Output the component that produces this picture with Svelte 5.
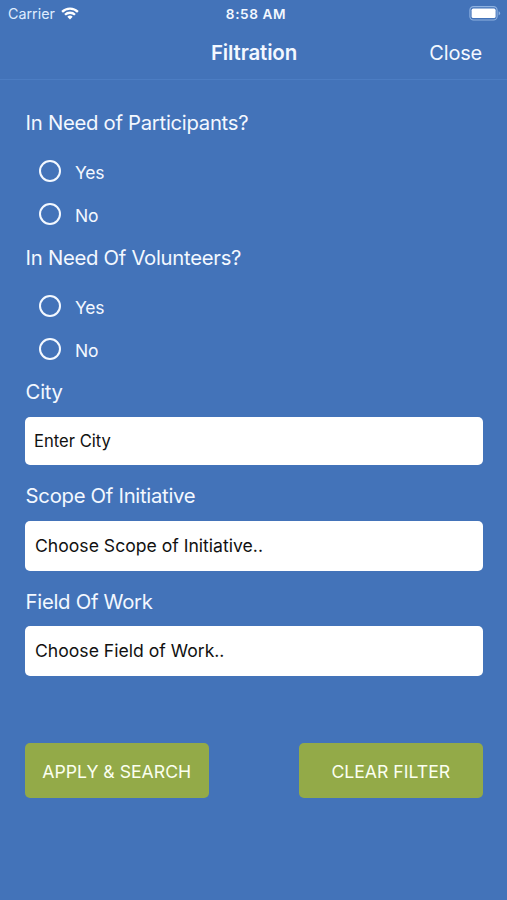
<script>
  const questions = ['In Need of Participants?', 'In Need Of Volunteers?'];
</script>

<div class="screen">
  <div class="status">
    <div class="carrier">
      <span>Carrier</span>
      <svg width="18" height="13" viewBox="0 0 18 13" fill="none" stroke="#fff" stroke-width="2.3">
        <path d="M1.1 4.9a11.2 11.2 0 0 1 15.8 0" />
        <path d="M4 7.8a7.1 7.1 0 0 1 10 0" />
        <path d="M9 12.5 6.3 9.8a3.8 3.8 0 0 1 5.4 0z" fill="#fff" stroke="none" />
      </svg>
    </div>
    <span class="time">8:58 AM</span>
    <svg class="battery" width="32" height="15" viewBox="0 0 32 15">
      <rect x="0.9" y="0.6" width="27.2" height="13.4" rx="3.6" fill="none" stroke="#8fb2e0" stroke-width="1.1" />
      <rect x="2.6" y="2.6" width="24" height="9.4" rx="1.6" fill="#fff" />
      <path d="M29.6 5.2q1.5.6 1.5 2.1t-1.5 2.1z" fill="#8fb2e0" />
    </svg>
  </div>

  <header>
    <h1>Filtration</h1>
    <button class="close">Close</button>
  </header>

  <main>
    {#each questions as question}
      <section>
        <h2>{question}</h2>
        <div class="options">
          {#each ['Yes', 'No'] as option}
            <div class="option"><span class="radio"></span><span class="word">{option}</span></div>
          {/each}
        </div>
      </section>
    {/each}

    <h2 class="town">City</h2>
    <div class="field city"><span>Enter City</span></div>
    <h2 class="scope">Scope Of Initiative</h2>
    <div class="field select"><span>Choose Scope of Initiative..</span></div>
    <h2 class="work">Field Of Work</h2>
    <div class="field select"><span>Choose Field of Work..</span></div>

    <div class="actions">
      <button class="apply">APPLY &amp; SEARCH</button>
      <button class="clear">CLEAR FILTER</button>
    </div>
  </main>
</div>

<style>
  :global(body) { background: #4373b9; }
  .screen {
    width: 507px;
    height: 900px;
    box-sizing: border-box;
    overflow: hidden;
    background: #4373b9;
    color: #f3f8ff;
    font-family: Inter, "Liberation Sans", sans-serif;
    white-space: nowrap;
  }
  .status {
    height: 27px;
    display: grid;
    grid-template-columns: 1fr auto 1fr;
    align-items: center;
    padding: 0 6px 0 8px;
    font-size: 14.3px;
  }
  .carrier { display: flex; align-items: center; gap: 6px; color: #dfecff; }
  .carrier svg { margin: -1px 0 0 0.5px; }
  .time { font-weight: 600; font-size: 13.6px; letter-spacing: 0.6px; margin-left: 3px; }
  .battery { justify-self: end; }
  header {
    height: 53px;
    display: grid;
    grid-template-columns: 1fr auto 1fr;
    align-items: center;
    padding: 0 25px;
    border-bottom: 1px solid #4c7dc3;
    box-sizing: border-box;
  }
  h1 { grid-column: 2; margin: -2px 0 0 1px; font-size: 20.5px; font-weight: 600; letter-spacing: -0.15px; }
  button { border: 0; margin: 0; padding: 0; background: none; color: inherit; font: inherit; }
  .close { justify-self: end; font-size: 20px; letter-spacing: -0.2px; }
  main { padding: 28px 24.5px 0 25px; }
  h2 {
    margin: 0;
    height: 30px;
    line-height: 30px;
    padding-left: 0.6px;
    font-size: 20.3px;
    font-weight: 400;
    letter-spacing: -0.28px;
  }
  section { height: 135px; }
  .options { padding: 12px 0 0 14px; }
  .option { display: flex; align-items: center; gap: 14px; height: 43px; }
  .radio { width: 22px; height: 22px; box-sizing: border-box; border: 2.4px solid #f3f8ff; border-radius: 50%; margin-top: -1px; }
  .word { font-size: 17.5px; margin-top: 2px; letter-spacing: -0.2px; }
  .field {
    background: #fff;
    color: #111;
    border-radius: 5px;
    display: flex;
    align-items: center;
    box-sizing: border-box;
  }
  .town { margin: -1px 0 10px; }
  .city { height: 48px; padding: 0 0 1px 9px; font-size: 16.6px; }
  .select { height: 50px; padding: 0 0 1px 10px; font-size: 17.6px; }
  .scope { margin: 16px 0 10px; }
  .work { margin: 16px 0 9px; }
  .actions { display: flex; justify-content: space-between; margin-top: 67px; }
  .actions button { width: 183.5px; height: 55px; padding-top: 1px; border-radius: 5px; background: #93aa48; color: #fbfff0; font-size: 17.65px; }
</style>
